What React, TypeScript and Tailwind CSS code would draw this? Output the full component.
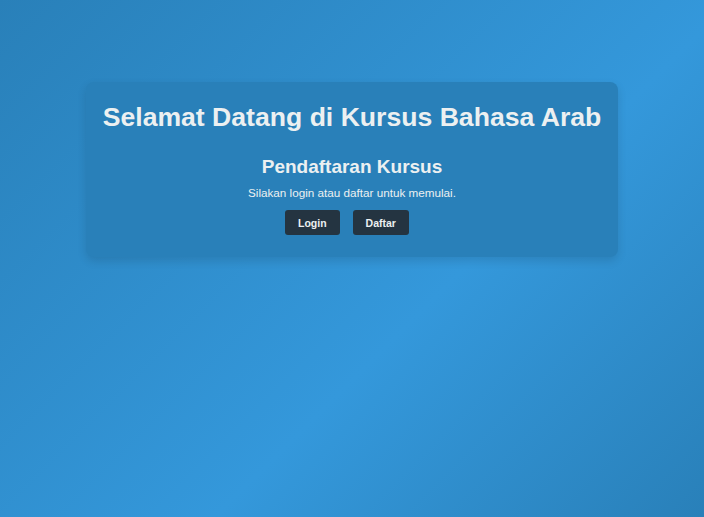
export default function App() {
  return (
    <div className="min-h-screen w-full bg-[linear-gradient(135deg,#2980b9_0%,#3498db_60%,#2980b9_100%)] font-['Liberation_Sans',Arial,sans-serif] leading-[normal] text-[#ecf0f1]">
      <div className="flex justify-center pt-[82px]">
        <div className="flex flex-col items-center rounded-lg bg-[#2980b9] px-[17px] pt-[20px] pb-[22px] shadow-[0_4px_10px_rgba(0,0,0,0.12)]">
          <h1 className="text-[26.6px] font-bold">Selamat Datang di Kursus Bahasa Arab</h1>
          <h2 className="mt-[23px] text-[19px] font-bold">Pendaftaran Kursus</h2>
          <p className="mt-[8px] text-[11.7px]">Silakan login atau daftar untuk memulai.</p>
          <div className="mt-[11px] flex gap-[13px] pr-[10px]">
            <button className="flex h-[25px] items-center rounded-[3px] bg-[#243441] px-[13px] text-[10.5px] font-bold text-[#ecf0f1]">
              Login
            </button>
            <button className="flex h-[25px] items-center rounded-[3px] bg-[#243441] px-[13px] text-[10.5px] font-bold text-[#ecf0f1]">
              Daftar
            </button>
          </div>
        </div>
      </div>
    </div>
  );
}
